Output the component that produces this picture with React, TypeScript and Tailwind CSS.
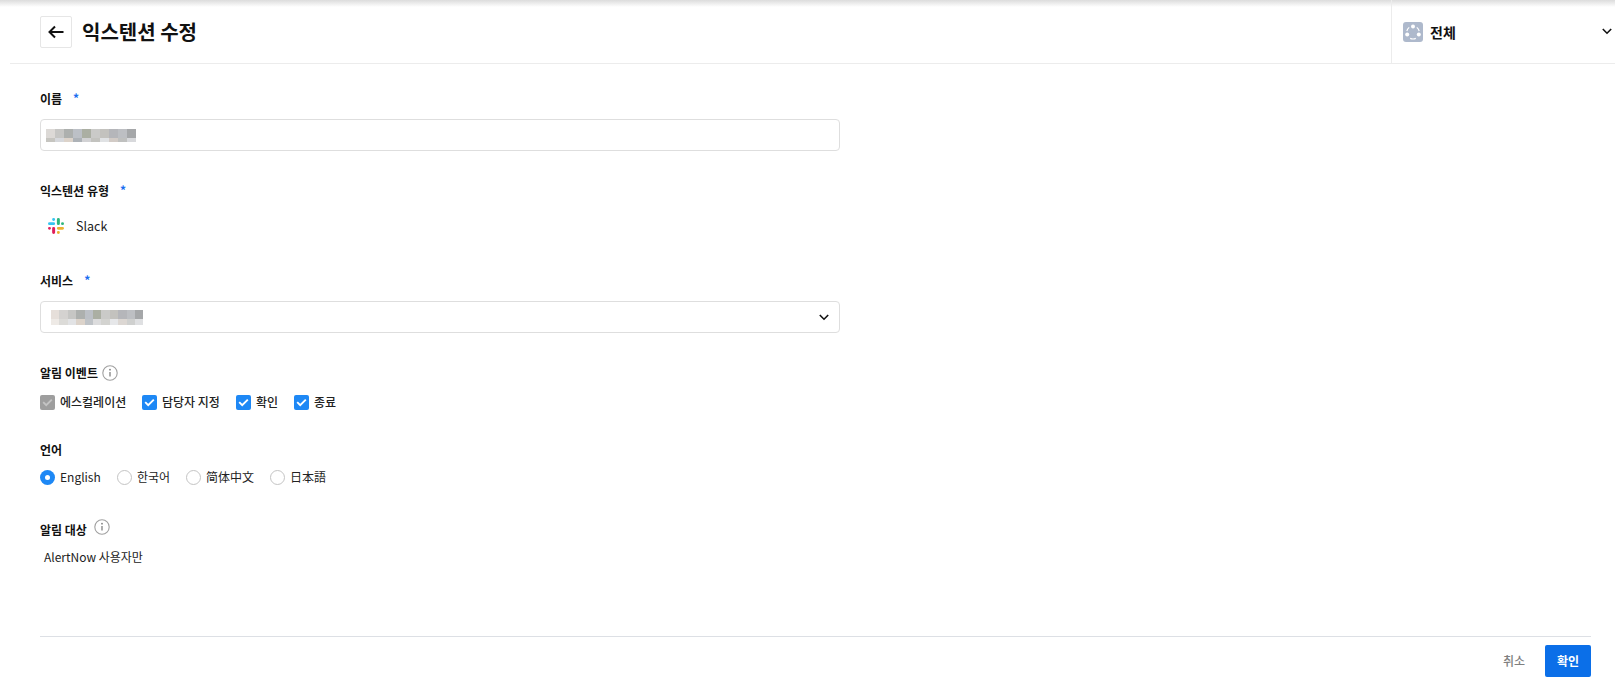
import React from "react";

const NAME_PIX = [
  ["#dcd9d6","#c6c6c4","#adb0ae","#bcc0c6","#abafa3","#cacac8","#c3c2be","#b5b6ba","#bdbfc3","#a5a7a9"],
  ["#c6c5c0","#d6d8dc","#dcd3ca","#adb2b7","#d2d2d4","#c3c3bf","#e0e2e4","#d2cbc6","#bfc0bf","#d8d9dc"],
];
const SVC_PIX = [
  ["#e6dfda","#d4d2d0","#c6c6c4","#adb0ae","#bcc0c6","#abafa3","#cacac8","#c3c2be","#b5b6ba","#bdbfc3","#a5a7a9"],
  ["#eeeae6","#dcdbd8","#e2e3e5","#dcd3ca","#bfc3c7","#dcdcdd","#d3d3d0","#e6e7e9","#dcd7d3","#cfd0cf","#dfe0e2"],
];

function Pixels({ rows, cell, h1, h2 }: { rows: string[][]; cell: number; h1: number; h2: number }) {
  return (
    <div className="flex flex-col">
      {rows.map((r, i) => (
        <div key={i} className="flex">
          {r.map((c, j) => (
            <div key={j} style={{ background: c, width: cell, height: i === 0 ? h1 : h2 }} />
          ))}
        </div>
      ))}
    </div>
  );
}

function Label({ children, star, gap }: { children: React.ReactNode; star?: boolean; gap?: string }) {
  return (
    <div className="flex h-[18px] items-center text-[12px] font-bold leading-[18px] text-[#111]">
      <span>{children}</span>
      {star && <span className={`${gap} relative -top-[1px] text-[12px] font-bold text-[#1a6cf0]`}>*</span>}
    </div>
  );
}

function Info({ className }: { className?: string }) {
  return (
    <svg width="16" height="16" viewBox="0 0 16 16" fill="none" className={className}>
      <circle cx="8" cy="8" r="7.2" stroke="#a0a0a0" strokeWidth="1.1" />
      <path d="M8 7v4.6" stroke="#808080" strokeWidth="1.3" />
      <circle cx="8" cy="4.7" r="0.9" fill="#808080" />
    </svg>
  );
}

function Check({ label, gray, className }: { label: string; gray?: boolean; className?: string }) {
  return (
    <div className={`flex items-center ${className ?? ""}`}>
      <span className={`flex h-[15px] w-[15px] items-center justify-center rounded-[2px] ${gray ? "bg-[#9e9e9e]" : "bg-[#1e88f5]"}`}>
        <svg width="11" height="9" viewBox="0 0 11 9" fill="none">
          <path d="M1.2 4.2 4.2 7.2 9.8 1.6" stroke={gray ? "#c4c4c4" : "#fff"} strokeWidth="1.9" />
        </svg>
      </span>
      <span className="ml-[5px] text-[12px] font-medium leading-[18px] text-[#222]">{label}</span>
    </div>
  );
}

function Radio({ label, on, className }: { label: string; on?: boolean; className?: string }) {
  return (
    <div className={`flex items-center ${className ?? ""}`}>
      {on ? (
        <span className="flex h-[15px] w-[15px] items-center justify-center rounded-full bg-[#1e88f5]">
          <span className="h-[5px] w-[5px] rounded-full bg-white" />
        </span>
      ) : (
        <span className="h-[15px] w-[15px] rounded-full border border-[#c4c4c4] bg-white" />
      )}
      <span className="ml-[5px] text-[12px] leading-[18px] text-[#222]">{label}</span>
    </div>
  );
}

function Slack() {
  return (
    <svg width="16" height="16" viewBox="0 0 54 54">
      <g fill="none" strokeWidth="10" strokeLinecap="round">
        <path d="M19 5h0M5 19h14" stroke="#36c5f0" />
        <path d="M49 19h0M35 5v14" stroke="#2eb67d" />
        <path d="M35 49h0M49 35H35" stroke="#ecb22e" />
        <path d="M5 35h0M19 49V35" stroke="#e01e5a" />
      </g>
    </svg>
  );
}

export default function App() {
  return (
    <div className="relative h-[693px] w-[1615px] overflow-hidden bg-white font-['Noto_Sans_CJK_KR','Noto_Sans',sans-serif]">
      <div className="absolute left-0 right-0 top-0 h-[7px] bg-gradient-to-b from-[#dcdcdc] to-white" />
      <header className="relative ml-[10px] flex h-[64px] items-stretch border-b border-[#ececec]">
        <div className="flex flex-1 items-center pl-[30px]">
          <button className="flex h-[32px] w-[32px] items-center justify-center rounded-[2px] border border-[#e6e6e6] bg-white">
            <svg width="16" height="14" viewBox="0 0 16 14" fill="none">
              <path d="M15.5 7H1.5M7 1.5 1.5 7 7 12.5" stroke="#111" strokeWidth="2" />
            </svg>
          </button>
          <h1 className="ml-[10px] text-[20px] font-bold leading-[28px] text-[#111]">익스텐션 수정</h1>
        </div>
        <div className="flex w-[224px] items-center border-l border-[#ececec] pl-[11px] pr-[3px]">
          <span className="flex h-[20px] w-[20px] items-center justify-center rounded-[3px] bg-[#aeb9cc]">
            <svg width="18" height="18" viewBox="0 0 18 18" fill="none">
              <circle cx="9" cy="3.4" r="2" fill="#fff" />
              <circle cx="3.2" cy="11.6" r="2" fill="#fff" />
              <circle cx="14.8" cy="11.6" r="2" fill="#fff" />
              <path d="M5.2 4.4A7 7 0 0 0 2.8 8M12.8 4.4A7 7 0 0 1 15.2 8M6.2 15.4a7 7 0 0 0 5.6 0" stroke="#fff" strokeWidth="1.2" />
            </svg>
          </span>
          <span className="ml-[7px] flex-1 text-[14px] font-bold leading-[20px] text-[#111]">전체</span>
          <svg width="10" height="7" viewBox="0 0 10 7" fill="none">
            <path d="M.8 1 5 5.2 9.2 1" stroke="#111" strokeWidth="1.6" />
          </svg>
        </div>
      </header>

      <main className="pl-[40px] pr-[24px]">
        <div className="pt-[26px]">
          <Label star gap="ml-[11px]">이름</Label>
          <div className="mt-[11px] flex h-[32px] w-[800px] items-center rounded-[4px] border border-[#dedede] pl-[5px]">
            <Pixels rows={NAME_PIX} cell={9} h1={9} h2={4} />
          </div>
        </div>

        <div className="pt-[31px]">
          <Label star gap="ml-[11px]">익스텐션 유형</Label>
          <div className="mt-[16px] flex h-[20px] items-center">
            <span className="ml-[8px]"><Slack /></span>
            <span className="ml-[12px] text-[12.5px] leading-[20px] text-[#222]">Slack</span>
          </div>
        </div>

        <div className="pt-[36px]">
          <Label star gap="ml-[11px]">서비스</Label>
          <div className="mt-[11px] flex h-[32px] w-[800px] items-center justify-between rounded-[4px] border border-[#dedede] pl-[10px] pr-[10px]">
            <Pixels rows={SVC_PIX} cell={8.4} h1={9} h2={6} />
            <svg width="10" height="7" viewBox="0 0 10 7" fill="none">
              <path d="M.8 1 5 5.2 9.2 1" stroke="#111" strokeWidth="1.6" />
            </svg>
          </div>
        </div>

        <div className="pt-[31px]">
          <div className="flex h-[18px] items-center">
            <Label>알림 이벤트</Label>
            <Info className="ml-[4px]" />
          </div>
          <div className="mt-[11px] flex h-[18px] items-center">
            <Check gray label="에스컬레이션" className="w-[102px]" />
            <Check label="담당자 지정" className="w-[94px]" />
            <Check label="확인" className="w-[58px]" />
            <Check label="종료" />
          </div>
        </div>

        <div className="pt-[30px]">
          <Label>언어</Label>
          <div className="mt-[9px] flex h-[18px] items-center">
            <Radio on label="English" className="w-[77px]" />
            <Radio label="한국어" className="w-[69px]" />
            <Radio label="简体中文" className="w-[84px]" />
            <Radio label="日本語" />
          </div>
        </div>

        <div className="pt-[35px]">
          <div className="flex h-[18px] items-center">
            <Label>알림 대상</Label>
            <Info className="relative -top-[3px] ml-[7px]" />
          </div>
          <p className="mt-[9px] pl-[4px] text-[12px] leading-[18px] text-[#222]">AlertNow 사용자만</p>
        </div>

        <footer className="mt-[70px] flex h-[41px] items-end justify-end border-t border-[#dde0e5]">
          <button className="mr-[20px] h-[32px] text-[12px] font-medium text-[#808080]">취소</button>
          <button className="h-[32px] w-[46px] rounded-[2px] bg-[#0b6fe8] text-[12px] font-bold text-white">확인</button>
        </footer>
      </main>
    </div>
  );
}
